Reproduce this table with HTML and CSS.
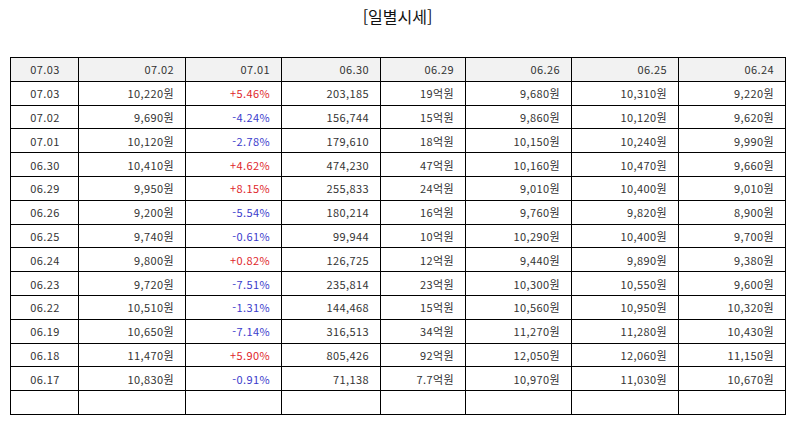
FILE: index.html
```html
<!DOCTYPE html>
<html lang="ko">
<head>
<meta charset="utf-8">
<link rel="stylesheet" href="styles.css">
</head>
<body>
<div class="page">
  <h1 class="title">[일별시세]</h1>
  <table class="quotes">
    <colgroup>
      <col class="c1"><col class="c2"><col class="c3"><col class="c4"><col class="c5"><col class="c6"><col class="c7"><col class="c8">
    </colgroup>
    <thead>
      <tr><th class="date">07.03</th><th>07.02</th><th>07.01</th><th>06.30</th><th>06.29</th><th>06.26</th><th>06.25</th><th>06.24</th></tr>
    </thead>
    <tbody>
      <tr><td class="date">07.03</td><td>10,220원</td><td class="up">+5.46%</td><td>203,185</td><td>19억원</td><td>9,680원</td><td>10,310원</td><td>9,220원</td></tr>
      <tr><td class="date">07.02</td><td>9,690원</td><td class="down">-4.24%</td><td>156,744</td><td>15억원</td><td>9,860원</td><td>10,120원</td><td>9,620원</td></tr>
      <tr><td class="date">07.01</td><td>10,120원</td><td class="down">-2.78%</td><td>179,610</td><td>18억원</td><td>10,150원</td><td>10,240원</td><td>9,990원</td></tr>
      <tr><td class="date">06.30</td><td>10,410원</td><td class="up">+4.62%</td><td>474,230</td><td>47억원</td><td>10,160원</td><td>10,470원</td><td>9,660원</td></tr>
      <tr><td class="date">06.29</td><td>9,950원</td><td class="up">+8.15%</td><td>255,833</td><td>24억원</td><td>9,010원</td><td>10,400원</td><td>9,010원</td></tr>
      <tr><td class="date">06.26</td><td>9,200원</td><td class="down">-5.54%</td><td>180,214</td><td>16억원</td><td>9,760원</td><td>9,820원</td><td>8,900원</td></tr>
      <tr><td class="date">06.25</td><td>9,740원</td><td class="down">-0.61%</td><td>99,944</td><td>10억원</td><td>10,290원</td><td>10,400원</td><td>9,700원</td></tr>
      <tr><td class="date">06.24</td><td>9,800원</td><td class="up">+0.82%</td><td>126,725</td><td>12억원</td><td>9,440원</td><td>9,890원</td><td>9,380원</td></tr>
      <tr><td class="date">06.23</td><td>9,720원</td><td class="down">-7.51%</td><td>235,814</td><td>23억원</td><td>10,300원</td><td>10,550원</td><td>9,600원</td></tr>
      <tr><td class="date">06.22</td><td>10,510원</td><td class="down">-1.31%</td><td>144,468</td><td>15억원</td><td>10,560원</td><td>10,950원</td><td>10,320원</td></tr>
      <tr><td class="date">06.19</td><td>10,650원</td><td class="down">-7.14%</td><td>316,513</td><td>34억원</td><td>11,270원</td><td>11,280원</td><td>10,430원</td></tr>
      <tr><td class="date">06.18</td><td>11,470원</td><td class="up">+5.90%</td><td>805,426</td><td>92억원</td><td>12,050원</td><td>12,060원</td><td>11,150원</td></tr>
      <tr><td class="date">06.17</td><td>10,830원</td><td class="down">-0.91%</td><td>71,138</td><td>7.7억원</td><td>10,970원</td><td>11,030원</td><td>10,670원</td></tr>
      <tr><td class="date"></td><td></td><td></td><td></td><td></td><td></td><td></td><td></td></tr>
    </tbody>
  </table>
</div>
</body>
</html>
```

FILE: styles.css
```css
html, body {
  margin: 0;
  padding: 0;
  background: #fff;
}
.page {
  padding: 0 9px 0 10px;
  font-family: "Noto Sans CJK KR", "Noto Sans", sans-serif;
  color: #333;
}
.title {
  margin: 0;
  padding-top: 5px;
  height: 57px;
  box-sizing: border-box;
  text-align: center;
  font-size: 16px;
  font-weight: normal;
  line-height: 22px;
  color: #111;
}
.quotes {
  width: 775px;
  border-collapse: collapse;
  table-layout: fixed;
  font-size: 11px;
  letter-spacing: 0.4px;
}
.c1 { width: 68px; }
.c2 { width: 107px; }
.c3 { width: 96px; }
.c4 { width: 99px; }
.c5 { width: 85px; }
.c6 { width: 106px; }
.c7 { width: 107px; }
.c8 { width: 107px; }
.quotes th,
.quotes td {
  border: 1px solid #000;
  height: 22.8px;
  padding: 0 11px 0 4px;
  text-align: right;
  font-weight: normal;
  line-height: 14px;
  white-space: nowrap;
}
.quotes th {
  background: #f2f2f2;
}
.quotes .date {
  text-align: center;
  padding: 0 4px 0 5px;
}
.quotes .up { color: #e0262b; }
.quotes .down { color: #3b3bcc; }
```
